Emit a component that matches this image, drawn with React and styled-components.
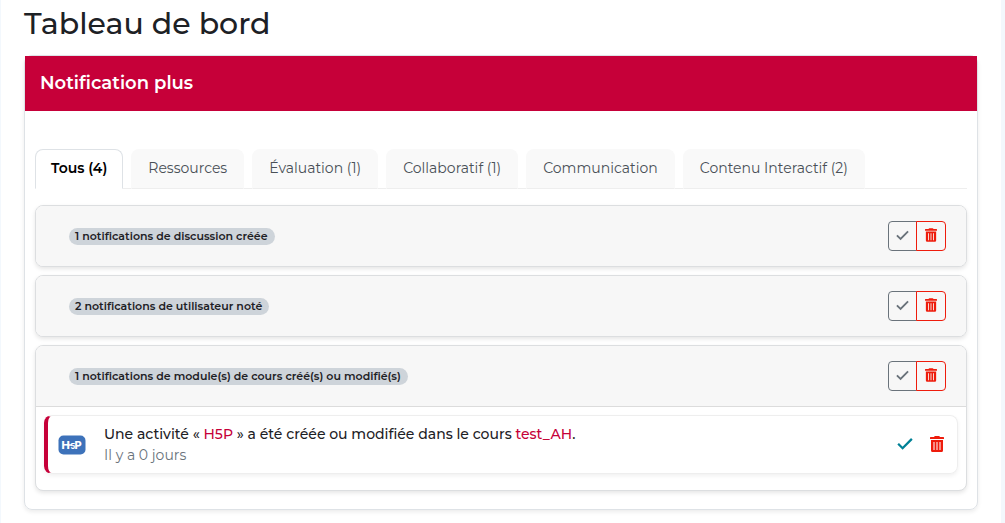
import React, { useState } from 'react';
import styled, { createGlobalStyle } from 'styled-components';

const GlobalStyle = createGlobalStyle`
  * {
    box-sizing: border-box;
  }
  body {
    margin: 0;
    background: #f3f8fd;
    color: #1d2125;
    font-family: Montserrat, Inter, sans-serif;
    font-size: 14px;
    line-height: 21px;
  }
  button {
    font: inherit;
    cursor: pointer;
  }
`;

const Page = styled.main`
  min-height: 100vh;
  margin: 0 4px 0 1px;
  padding: 4px 23px 12px;
  background: #fff;
`;

const Title = styled.h1`
  margin: 0 0 11px;
  font-size: 30px;
  font-weight: 500;
  line-height: 40px;
`;

const Card = styled.section`
  border: 1px solid #dee2e6;
  border-radius: 8px;
  box-shadow: 0 2px 4px rgba(0, 0, 0, 0.08);
`;

const CardTitle = styled.h2`
  margin: 0;
  padding: 12px 15px 13px;
  background: #c60039;
  color: #fff;
  font-size: 18px;
  font-weight: 600;
  line-height: 30px;
`;

const CardBody = styled.div`
  padding: 38px 10px 18px;
`;

const Tabs = styled.div`
  display: flex;
  gap: 8px;
  margin-bottom: 16px;
  border-bottom: 1px solid #eee;
`;

const Tab = styled.button`
  height: 40px;
  margin-bottom: -1px;
  padding: ${props => (props.$active ? '0 15px 2px' : '0 16px 2px')};
  border: 1px solid ${props => (props.$active ? '#dee2e6' : '#f9f9f9')};
  border-bottom-color: ${props => (props.$active ? '#fff' : '#eee')};
  border-radius: 8px 8px 0 0;
  background: ${props => (props.$active ? '#fff' : '#f9f9f9')};
  color: ${props => (props.$active ? '#000' : '#495057')};
  font-weight: ${props => (props.$active ? 600 : 400)};
  white-space: nowrap;
`;

const Groups = styled.div`
  display: grid;
  gap: 8px;
`;

const Group = styled.article`
  border: 1px solid #dcdee0;
  border-radius: 8px;
  background: #fff;
  box-shadow: 0 2px 4px rgba(0, 0, 0, 0.1);
  overflow: hidden;
`;

const GroupHeader = styled.header`
  display: flex;
  align-items: center;
  justify-content: space-between;
  padding: 15px 20px 15px 33px;
  background: #f7f7f7;
`;

const Badge = styled.span`
  padding: 0 7px 0 6px;
  border-radius: 9px;
  background: #ced4da;
  font-size: 11px;
  font-weight: 600;
  line-height: 17px;
`;

const ButtonGroup = styled.div`
  display: flex;
`;

const OutlineButton = styled.button`
  display: grid;
  place-items: center;
  width: 29px;
  height: 30px;
  padding: 0 0 2px;
  border: 1px solid ${props => props.$color};
  border-radius: 4px 0 0 4px;
  background: transparent;
  color: ${props => props.$color};

  & + & {
    width: 30px;
    margin-left: -1px;
    border-radius: 0 4px 4px 0;
  }
`;

const GroupBody = styled.div`
  padding: 8px 8px 16px;
  border-top: 1px solid #dcdcdc;
`;

const Item = styled.div`
  display: flex;
  align-items: center;
  gap: 18px;
  padding: 8px 12px 7px 10px;
  border: 1px solid #eee;
  border-left: 4px solid #c60039;
  border-radius: 8px;
  box-shadow: 0 2px 4px rgba(0, 0, 0, 0.06);
`;

const ItemText = styled.div`
  flex: 1;
`;

const Message = styled.p`
  margin: 0;
  font-weight: 500;

  a {
    color: #c60039;
    text-decoration: none;
  }
`;

const Time = styled.small`
  display: block;
  color: #6a737b;
  font-size: 14px;
`;

const ItemActions = styled.div`
  display: flex;
  gap: 16px;
`;

const IconButton = styled.button`
  display: grid;
  place-items: center;
  width: 16px;
  height: 20px;
  padding: 0 0 2px;
  border: 0;
  background: transparent;
  color: ${props => props.$color};
`;

const Check = ({ size }) => (
  <svg width={size} height={size} viewBox="0 0 14 14" fill="none" aria-hidden="true">
    <path d="M1 6.8 L4.9 10.7 L13 2.5" stroke="currentColor" strokeWidth="2" />
  </svg>
);

const Trash = ({ width, height }) => (
  <svg width={width} height={height} viewBox="0 0 14 16" fill="currentColor" aria-hidden="true">
    <path d="M4.3 0.6 Q4.5 0 5.1 0 H8.9 Q9.5 0 9.7 0.6 L10 1 H13.4 Q14 1 14 1.6 V3 H0 V1.6 Q0 1 0.6 1 H4Z" />
    <path
      fillRule="evenodd"
      d="M1 4 H13 V14.5 Q13 16 11.5 16 H2.5 Q1 16 1 14.5Z M3.5 6 V14 H4.5 V6Z M6.5 6 V14 H7.5 V6Z M9.5 6 V14 H10.5 V6Z"
    />
  </svg>
);

const H5pLogo = () => (
  <svg width="28" height="20" viewBox="0 0 28 20" role="img" aria-label="H5P">
    <rect x="0.5" y="0.5" width="27" height="19" rx="5" fill="#3d72ba" />
    <g fill="#fff" fontFamily="Inter, sans-serif" fontWeight="800">
      <text x="3.5" y="14" fontSize="11">H</text>
      <text x="12.5" y="14" fontSize="7">5</text>
      <text x="16.5" y="14" fontSize="11">P</text>
    </g>
    <path d="M10 10 H14" stroke="#fff" strokeWidth="1.5" />
  </svg>
);

const tabs = [
  'Tous (4)',
  'Ressources',
  'Évaluation (1)',
  'Collaboratif (1)',
  'Communication',
  'Contenu Interactif (2)',
];

const NotificationGroup = ({ label, children }) => (
  <Group>
    <GroupHeader>
      <Badge>{label}</Badge>
      <ButtonGroup>
        <OutlineButton $color="#6a737b" aria-label="Marquer comme lu">
          <Check size={13} />
        </OutlineButton>
        <OutlineButton $color="#ee1c0c" aria-label="Supprimer">
          <Trash width={12} height={14} />
        </OutlineButton>
      </ButtonGroup>
    </GroupHeader>
    {children && <GroupBody>{children}</GroupBody>}
  </Group>
);

export default function App() {
  const [active, setActive] = useState(0);

  return (
    <>
      <GlobalStyle />
      <Page>
        <Title>Tableau de bord</Title>
        <Card>
          <CardTitle>Notification plus</CardTitle>
          <CardBody>
            <Tabs role="tablist">
              {tabs.map((tab, i) => (
                <Tab
                  key={tab}
                  role="tab"
                  aria-selected={i === active}
                  $active={i === active}
                  onClick={() => setActive(i)}
                >
                  {tab}
                </Tab>
              ))}
            </Tabs>
            <Groups>
              <NotificationGroup label="1 notifications de discussion créée" />
              <NotificationGroup label="2 notifications de utilisateur noté" />
              <NotificationGroup label="1 notifications de module(s) de cours créé(s) ou modifié(s)">
                <Item>
                  <H5pLogo />
                  <ItemText>
                    <Message>
                      Une activité « <a href="#h5p">H5P</a> » a été créée ou modifiée dans le
                      cours <a href="#cours">test_AH</a>.
                    </Message>
                    <Time>Il y a 0 jours</Time>
                  </ItemText>
                  <ItemActions>
                    <IconButton $color="#008196" aria-label="Marquer comme lu">
                      <Check size={16} />
                    </IconButton>
                    <IconButton $color="#ee1c0c" aria-label="Supprimer">
                      <Trash width={14} height={16} />
                    </IconButton>
                  </ItemActions>
                </Item>
              </NotificationGroup>
            </Groups>
          </CardBody>
        </Card>
      </Page>
    </>
  );
}
